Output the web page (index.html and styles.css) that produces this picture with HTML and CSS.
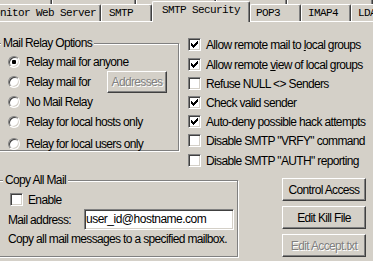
FILE: index.html
```html
<!DOCTYPE html>
<html lang="en">
<head>
    <meta charset="UTF-8">
    <meta name="viewport" content="width=device-width, initial-scale=1.0">
    <title>SMTP Security</title>
    <link rel="stylesheet" href="styles.css">
</head>
<body>
    <div class="dialog">
        <!-- back row of tabs, only its bottom edge shows -->
        <div class="tabs-back">
            <span class="back-tab back-1"></span>
            <span class="back-tab back-2"></span>
            <span class="back-tab back-3"></span>
            <span class="back-tab back-4"></span>
            <span class="back-tab back-5"></span>
        </div>

        <div class="tabs">
            <div class="tab tab-web">Monitor Web Server</div>
            <div class="tab tab-smtp">SMTP</div>
            <div class="tab tab-active">SMTP Security</div>
            <div class="tab tab-pop">POP3</div>
            <div class="tab tab-imap">IMAP4</div>
            <div class="tab tab-ldap">LDAP</div>
        </div>

        <div class="panel">
            <div class="panel-top">
                <div class="group group-relay">
                    <div class="group-title">Mail Relay Options</div>
                    <div class="radio-list">
                        <div class="option"><span class="radio checked"></span>Relay mail for anyone</div>
                        <div class="option">
                            <span class="radio"></span>
                            <span class="option-text">Relay mail for</span>
                            <button class="btn btn-small" disabled>Addresses</button>
                        </div>
                        <div class="option"><span class="radio"></span>No Mail Relay</div>
                        <div class="option"><span class="radio"></span>Relay for local hosts only</div>
                        <div class="option option-last"><span class="radio"></span>Relay for local users only</div>
                    </div>
                </div>

                <div class="checks">
                    <div class="check check-first">
                        <span class="box"><svg class="tick" viewBox="0 0 11 11"><path d="M8 2h1v1h-1zM7 3h2v1h-2zM2 4h1v1h-1zM6 4h3v1h-3zM2 5h2v1h-2zM5 5h3v1h-3zM2 6h5v1h-5zM3 7h3v1h-3zM4 8h1v1h-1z"/></svg></span>
                        <span>Allow remote mail to <u>l</u>ocal groups</span>
                    </div>
                    <div class="check">
                        <span class="box"><svg class="tick" viewBox="0 0 11 11"><path d="M8 2h1v1h-1zM7 3h2v1h-2zM2 4h1v1h-1zM6 4h3v1h-3zM2 5h2v1h-2zM5 5h3v1h-3zM2 6h5v1h-5zM3 7h3v1h-3zM4 8h1v1h-1z"/></svg></span>
                        <span>Allow remote <u>v</u>iew of local groups</span>
                    </div>
                    <div class="check">
                        <span class="box"></span>
                        <span>Refuse NULL &lt;&gt; Senders</span>
                    </div>
                    <div class="check">
                        <span class="box"><svg class="tick" viewBox="0 0 11 11"><path d="M8 2h1v1h-1zM7 3h2v1h-2zM2 4h1v1h-1zM6 4h3v1h-3zM2 5h2v1h-2zM5 5h3v1h-3zM2 6h5v1h-5zM3 7h3v1h-3zM4 8h1v1h-1z"/></svg></span>
                        <span>Check valid sender</span>
                    </div>
                    <div class="check">
                        <span class="box"><svg class="tick" viewBox="0 0 11 11"><path d="M8 2h1v1h-1zM7 3h2v1h-2zM2 4h1v1h-1zM6 4h3v1h-3zM2 5h2v1h-2zM5 5h3v1h-3zM2 6h5v1h-5zM3 7h3v1h-3zM4 8h1v1h-1z"/></svg></span>
                        <span>Auto-deny possible hack attempts</span>
                    </div>
                    <div class="check">
                        <span class="box"></span>
                        <span>Disable SMTP "VRFY" command</span>
                    </div>
                    <div class="check check-last">
                        <span class="box"></span>
                        <span>Disable SMTP "AUTH" reporting</span>
                    </div>
                </div>
            </div>

            <div class="panel-bottom">
                <div class="group group-copy">
                    <div class="group-title">Copy All Mail</div>
                    <div class="check check-enable">
                        <span class="box"></span>
                        <span>Enable</span>
                    </div>
                    <div class="field-row">
                        <span class="field-label">Mail address:</span>
                        <div class="text-input">user_id@hostname.com</div>
                    </div>
                    <p class="note">Copy all mail messages to a specified mailbox.</p>
                </div>

                <div class="button-col">
                    <button class="btn">Control Access</button>
                    <button class="btn">Edit Kill File</button>
                    <button class="btn" disabled>Edit Accept.txt</button>
                </div>
            </div>
        </div>
    </div>
</body>
</html>
```

FILE: styles.css
```css
:root {
    --face: #d4d0c8;
    --light: #ffffff;
    --shadow: #808080;
    --dark: #404040;
}

* {
    box-sizing: border-box;
    margin: 0;
    padding: 0;
}

body {
    background-color: var(--face);
    color: #000;
    font-family: 'Liberation Sans', Arial, sans-serif;
    font-size: 12px;
    letter-spacing: -0.65px;
    overflow: hidden;
}

.dialog {
    width: 373px;
    height: 261px;
    overflow: hidden;
}

/* Tabs */
.tabs-back {
    display: flex;
    height: 4px;
    margin-left: -20px;
}

.back-tab {
    height: 4px;
    border-left: 1px solid var(--light);
    border-right: 1px solid var(--dark);
    box-shadow: inset -1px 0 var(--shadow);
}

.back-1 { width: 76px; }
.back-2 { width: 88px; }
.back-3 { width: 84px; }
.back-4 { width: 75px; }
.back-5 { width: 90px; }

.tabs {
    display: flex;
    align-items: flex-start;
    height: 18px;
    margin-left: -20px;
    border-bottom: 1px solid var(--light);
    font-family: 'Liberation Mono', 'Courier New', monospace;
    font-size: 11px;
    letter-spacing: -0.6px;
}

.tab {
    flex-shrink: 0;
    height: 17px;
    padding: 2px 0 0 7px;
    border: 1px solid var(--light);
    border-bottom: 0;
    border-right-color: var(--dark);
    border-radius: 2px 2px 0 0;
    box-shadow: inset -1px 0 var(--shadow);
    background-color: var(--face);
    line-height: 13px;
    white-space: nowrap;
}

.tab-web { width: 121px; }
.tab-smtp { width: 51px; }
.tab-pop { width: 51px; padding-left: 5px; }
.tab-imap { width: 50px; padding-left: 6px; }
.tab-ldap { width: 60px; padding-left: 6px; }

.tab-active {
    width: 98px;
    height: 21px;
    margin-top: -3px;
    padding-left: 9px;
}

/* Group boxes */
.group {
    border: 1px solid var(--shadow);
    box-shadow: inset 1px 1px 0 var(--light), 1px 1px 0 var(--light);
}

.group-title {
    width: fit-content;
    margin-top: -7px;
    padding: 0 2px;
    background-color: var(--face);
    line-height: 13px;
}

.panel-top {
    display: flex;
    align-items: flex-start;
}

.group-relay {
    width: 182px;
    height: 108px;
    margin: 21px 0 0 -3px;
}

.group-relay .group-title {
    margin-left: 3px;
}

.radio-list {
    margin-top: 2px;
    padding-left: 10px;
}

.option {
    display: flex;
    align-items: center;
    gap: 6px;
    height: 20px;
    white-space: nowrap;
}

.option-last {
    margin-top: 2px;
}

.option-text {
    width: 75px;
}

.radio {
    display: flex;
    align-items: center;
    justify-content: center;
    flex-shrink: 0;
    width: 12px;
    height: 12px;
    border: 1px solid;
    border-color: var(--shadow) var(--light) var(--light) var(--shadow);
    border-radius: 50%;
    background-color: #fff;
    box-shadow: inset 1px 1px 0 var(--dark), inset -1px -1px 0 var(--face);
}

.radio.checked::after {
    content: '';
    width: 4px;
    height: 4px;
    border-radius: 1px;
    background-color: #000;
}

/* Check boxes */
.checks {
    margin: 13px 0 0 9px;
}

.check {
    display: flex;
    align-items: center;
    gap: 5px;
    height: 19px;
    white-space: nowrap;
}

.check-first {
    margin-bottom: 1px;
}

.check-last {
    margin-top: 1px;
}

.box {
    flex-shrink: 0;
    width: 13px;
    height: 13px;
    border: 1px solid;
    border-color: var(--shadow) var(--light) var(--light) var(--shadow);
    background-color: #fff;
    box-shadow: inset 1px 1px 0 var(--dark), inset -1px -1px 0 var(--face);
}

.tick {
    display: block;
    width: 11px;
    height: 11px;
    shape-rendering: crispEdges;
}

/* Copy all mail */
.panel-bottom {
    display: flex;
    align-items: flex-start;
}

.group-copy {
    width: 241px;
    height: 77px;
    margin: 10px 0 0 -3px;
}

.group-copy .group-title {
    margin-left: 5px;
}

.check-enable {
    margin-top: 3px;
    padding-left: 12px;
}

.field-row {
    display: flex;
    align-items: center;
    padding-left: 10px;
}

.field-label {
    width: 76px;
}

.text-input {
    width: 150px;
    height: 21px;
    padding-left: 1px;
    border: 1px solid;
    border-color: var(--shadow) var(--light) var(--light) var(--shadow);
    background-color: #fff;
    box-shadow: inset 1px 1px 0 var(--dark), inset -1px -1px 0 var(--face);
    line-height: 19px;
    letter-spacing: -0.5px;
}

.note {
    margin-top: 3px;
    padding-left: 10px;
    line-height: 13px;
    white-space: nowrap;
}

/* Buttons */
.button-col {
    display: flex;
    flex-direction: column;
    gap: 5px;
    margin: 8px 0 0 44px;
}

.btn {
    width: 84px;
    height: 23px;
    border: 1px solid;
    border-color: var(--light) var(--dark) var(--dark) var(--light);
    background-color: var(--face);
    box-shadow: inset -1px -1px 0 var(--shadow);
    color: #000;
    font: inherit;
    letter-spacing: inherit;
}

.btn-small {
    width: 60px;
    height: 22px;
}

.btn:disabled {
    color: var(--shadow);
    text-shadow: 1px 1px 0 var(--light);
}
```
